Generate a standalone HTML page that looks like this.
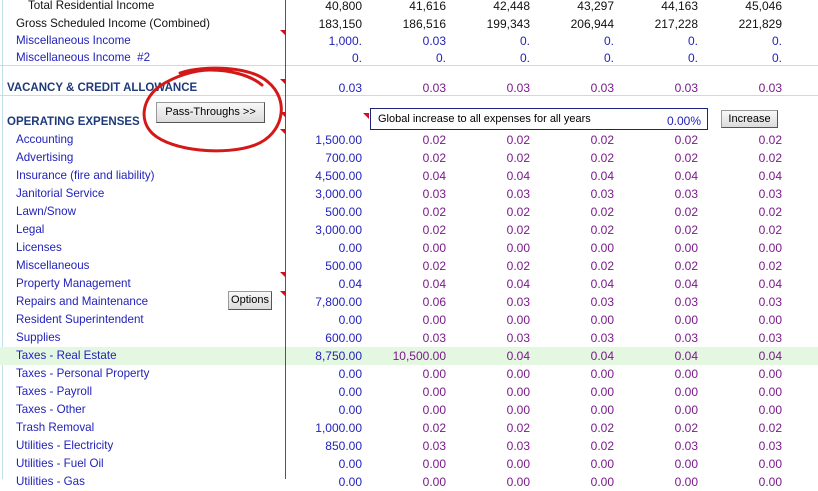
<!DOCTYPE html>
<html><head><style>
body{margin:0;width:818px;height:479px;overflow:hidden;background:#fff;font-family:"Liberation Sans",Arial,sans-serif;font-size:12px;position:relative}
.r{position:absolute;left:0;width:818px;height:18px;line-height:18px;margin-top:1px}
.r span{position:absolute;top:0;white-space:nowrap}
.l{left:16px;color:#2222bb;font-size:11.6px}
.v{text-align:right;width:80px;color:#2222bb}
.p{color:#7a1a8a}
.k{color:#111}
.a{right:456px}.b{right:372px}.c{right:288px}.d{right:204px}.e{right:120px}.f{right:36px}
.hd{font-weight:bold;color:#1e3a7a;left:7px!important;font-size:11.5px}
.tri{position:absolute;width:0;height:0;border-top:6px solid #d01020;border-left:6px solid transparent}
.btn{position:absolute;background:linear-gradient(#f8f8f8,#dcdcdc);border:1px solid #999;border-right-color:#555;border-bottom-color:#555;font-size:11px;text-align:center;color:#000}
</style></head><body>
<div style="position:absolute;left:2px;top:0;width:1px;height:479px;background:#bfe0ea"></div>
<div style="position:absolute;left:0;top:65px;width:818px;height:1px;background:#bfe0ea"></div>
<div style="position:absolute;left:0;top:95px;width:818px;height:1px;background:#bfe0ea"></div>
<div style="position:absolute;left:0;top:347px;width:818px;height:18px;background:#e4f7e0"></div>
<div style="position:absolute;left:285px;top:0;width:1px;height:479px;background:#555"></div>

<div class="r k" style="top:-4px"><span class="k" style="left:28px;font-size:11.6px">Total Residential Income</span><span class="v k a">40,800</span><span class="v k b">41,616</span><span class="v k c">42,448</span><span class="v k d">43,297</span><span class="v k e">44,163</span><span class="v k f">45,046</span></div>
<div class="r" style="top:14px"><span class="k" style="left:16px;font-size:11.6px">Gross Scheduled Income (Combined)</span><span class="v k a">183,150</span><span class="v k b">186,516</span><span class="v k c">199,343</span><span class="v k d">206,944</span><span class="v k e">217,228</span><span class="v k f">221,829</span></div>
<div class="r" style="top:31px"><span class="l">Miscellaneous Income</span><span class="v a">1,000.</span><span class="v b">0.03</span><span class="v c">0.</span><span class="v d">0.</span><span class="v e">0.</span><span class="v f">0.</span></div>
<div class="r" style="top:48px"><span class="l">Miscellaneous Income &nbsp;#2</span><span class="v a">0.</span><span class="v b">0.</span><span class="v c">0.</span><span class="v d">0.</span><span class="v e">0.</span><span class="v f">0.</span></div>
<div class="r" style="top:78px"><span class="hd">VACANCY &amp; CREDIT ALLOWANCE</span><span class="v a">0.03</span><span class="v p b">0.03</span><span class="v p c">0.03</span><span class="v p d">0.03</span><span class="v p e">0.03</span><span class="v p f">0.03</span></div>
<div class="r" style="top:112px"><span class="hd">OPERATING EXPENSES</span></div>

<div class="r" style="top:130px"><span class="l">Accounting</span><span class="v a">1,500.00</span><span class="v p b">0.02</span><span class="v p c">0.02</span><span class="v p d">0.02</span><span class="v p e">0.02</span><span class="v p f">0.02</span></div>
<div class="r" style="top:148px"><span class="l">Advertising</span><span class="v a">700.00</span><span class="v p b">0.02</span><span class="v p c">0.02</span><span class="v p d">0.02</span><span class="v p e">0.02</span><span class="v p f">0.02</span></div>
<div class="r" style="top:166px"><span class="l">Insurance (fire and liability)</span><span class="v a">4,500.00</span><span class="v p b">0.04</span><span class="v p c">0.04</span><span class="v p d">0.04</span><span class="v p e">0.04</span><span class="v p f">0.04</span></div>
<div class="r" style="top:184px"><span class="l">Janitorial Service</span><span class="v a">3,000.00</span><span class="v p b">0.03</span><span class="v p c">0.03</span><span class="v p d">0.03</span><span class="v p e">0.03</span><span class="v p f">0.03</span></div>
<div class="r" style="top:202px"><span class="l">Lawn/Snow</span><span class="v a">500.00</span><span class="v p b">0.02</span><span class="v p c">0.02</span><span class="v p d">0.02</span><span class="v p e">0.02</span><span class="v p f">0.02</span></div>
<div class="r" style="top:220px"><span class="l">Legal</span><span class="v a">3,000.00</span><span class="v p b">0.02</span><span class="v p c">0.02</span><span class="v p d">0.02</span><span class="v p e">0.02</span><span class="v p f">0.02</span></div>
<div class="r" style="top:238px"><span class="l">Licenses</span><span class="v a">0.00</span><span class="v p b">0.00</span><span class="v p c">0.00</span><span class="v p d">0.00</span><span class="v p e">0.00</span><span class="v p f">0.00</span></div>
<div class="r" style="top:256px"><span class="l">Miscellaneous</span><span class="v a">500.00</span><span class="v p b">0.02</span><span class="v p c">0.02</span><span class="v p d">0.02</span><span class="v p e">0.02</span><span class="v p f">0.02</span></div>
<div class="r" style="top:274px"><span class="l">Property Management</span><span class="v a">0.04</span><span class="v p b">0.04</span><span class="v p c">0.04</span><span class="v p d">0.04</span><span class="v p e">0.04</span><span class="v p f">0.04</span></div>
<div class="r" style="top:292px"><span class="l">Repairs and Maintenance</span><span class="v a">7,800.00</span><span class="v p b">0.06</span><span class="v p c">0.03</span><span class="v p d">0.03</span><span class="v p e">0.03</span><span class="v p f">0.03</span></div>
<div class="r" style="top:310px"><span class="l">Resident Superintendent</span><span class="v a">0.00</span><span class="v p b">0.00</span><span class="v p c">0.00</span><span class="v p d">0.00</span><span class="v p e">0.00</span><span class="v p f">0.00</span></div>
<div class="r" style="top:328px"><span class="l">Supplies</span><span class="v a">600.00</span><span class="v p b">0.03</span><span class="v p c">0.03</span><span class="v p d">0.03</span><span class="v p e">0.03</span><span class="v p f">0.03</span></div>
<div class="r" style="top:346px"><span class="l">Taxes - Real Estate</span><span class="v a">8,750.00</span><span class="v p b">10,500.00</span><span class="v p c">0.04</span><span class="v p d">0.04</span><span class="v p e">0.04</span><span class="v p f">0.04</span></div>
<div class="r" style="top:364px"><span class="l">Taxes - Personal Property</span><span class="v a">0.00</span><span class="v p b">0.00</span><span class="v p c">0.00</span><span class="v p d">0.00</span><span class="v p e">0.00</span><span class="v p f">0.00</span></div>
<div class="r" style="top:382px"><span class="l">Taxes - Payroll</span><span class="v a">0.00</span><span class="v p b">0.00</span><span class="v p c">0.00</span><span class="v p d">0.00</span><span class="v p e">0.00</span><span class="v p f">0.00</span></div>
<div class="r" style="top:400px"><span class="l">Taxes - Other</span><span class="v a">0.00</span><span class="v p b">0.00</span><span class="v p c">0.00</span><span class="v p d">0.00</span><span class="v p e">0.00</span><span class="v p f">0.00</span></div>
<div class="r" style="top:418px"><span class="l">Trash Removal</span><span class="v a">1,000.00</span><span class="v p b">0.02</span><span class="v p c">0.02</span><span class="v p d">0.02</span><span class="v p e">0.02</span><span class="v p f">0.02</span></div>
<div class="r" style="top:436px"><span class="l">Utilities - Electricity</span><span class="v a">850.00</span><span class="v p b">0.03</span><span class="v p c">0.03</span><span class="v p d">0.02</span><span class="v p e">0.03</span><span class="v p f">0.03</span></div>
<div class="r" style="top:454px"><span class="l">Utilities - Fuel Oil</span><span class="v a">0.00</span><span class="v p b">0.00</span><span class="v p c">0.00</span><span class="v p d">0.00</span><span class="v p e">0.00</span><span class="v p f">0.00</span></div>
<div class="r" style="top:472px"><span class="l">Utilities - Gas</span><span class="v a">0.00</span><span class="v p b">0.00</span><span class="v p c">0.00</span><span class="v p d">0.00</span><span class="v p e">0.00</span><span class="v p f">0.00</span></div>

<div class="tri" style="left:280px;top:30px"></div>
<div class="tri" style="left:280px;top:79px"></div>
<div class="tri" style="left:280px;top:112px"></div>
<div class="tri" style="left:280px;top:129px"></div>
<div class="tri" style="left:280px;top:272px"></div>
<div class="tri" style="left:280px;top:291px"></div>
<div class="tri" style="left:363px;top:113px"></div>

<div style="position:absolute;left:370px;top:108px;width:336px;height:20px;border:1px solid #1a237e;background:#fff">
<span style="position:absolute;left:7px;top:4px;font-size:11px;color:#000">Global increase to all expenses for all years</span>
<span style="position:absolute;right:6px;top:5px;color:#2222bb">0.00%</span></div>
<div class="btn" style="left:721px;top:110px;width:55px;height:16px;line-height:16px">Increase</div>
<div class="btn" style="left:156px;top:102px;width:107px;height:19px;line-height:19px">Pass-Throughs &gt;&gt;</div>
<div class="btn" style="left:228px;top:291px;width:42px;height:17px;line-height:17px">Options</div>

<svg style="position:absolute;left:0;top:0" width="818" height="479">
<path d="M180 73 C205 65 250 66 268 82 C290 100 284 134 255 145 C225 156 172 151 153 134 C138 120 143 98 160 86 C175 76 195 70 210 70 C230 70 250 75 262 85" fill="none" stroke="#d41818" stroke-width="3" stroke-linecap="round"/>
</svg>
</body></html>
